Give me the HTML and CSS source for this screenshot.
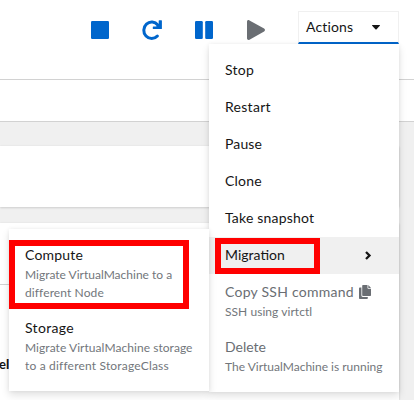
FILE: index.html
```html
<!DOCTYPE html>
<html lang="en">
<head>
<meta charset="utf-8">
<title>VirtualMachine actions</title>
<link rel="stylesheet" href="styles.css">
</head>
<body>
<div class="page">
  <header class="toolbar">
    <svg class="icon" viewBox="0 0 20 20"><rect x="1" y="1" width="18" height="18" rx="1.2"/></svg>
    <svg class="icon" viewBox="0 0 20 20"><path d="M15.400 16A7.900 8.300 0 1 1 15.800 5" class="arc"/><path d="M17.200.2h2.200q.5 0 .5.5v7.800q0 .5-.5.500h-8q-.6 0-.6-.5V6.900q0-.5.6-.5h2.800l2.500-2.600V.7q0-.5.5-.5z"/></svg>
    <svg class="icon" viewBox="0 0 20 20"><rect x="1" y="1" width="7.800" height="18" rx="1.300"/><rect x="11.200" y="1" width="7.800" height="18" rx="1.300"/></svg>
    <svg class="icon muted" viewBox="0 0 20 20"><path d="M1 1.800C1 .3 2.300-.3 3.500.4l14.600 8.200c1.200.7 1.200 2.100 0 2.800L3.500 19.700C2.300 20.300 1 19.600 1 18.200z"/></svg>
    <button class="toggle"><span class="t-actions">Actions</span><svg class="caret" viewBox="0 0 8 5"><path d="M.5 0h7q.8 0 .3.700L4.600 4.200q-.6.600-1.200 0L.2.700Q-.3 0 .5 0z"/></svg></button>
  </header>
  <div class="tabs"></div>
  <main class="content">
    <section class="card first"></section>
    <section class="card second"><div class="rule"></div><b class="label">eIn</b></section>
  </main>
</div>

<div class="menu main-menu">
  <div class="item"><span class="name t-stop">Stop</span></div>
  <div class="item"><span class="name t-restart">Restart</span></div>
  <div class="item"><span class="name t-pause">Pause</span></div>
  <div class="item"><span class="name t-clone">Clone</span></div>
  <div class="item"><span class="name t-snap">Take snapshot</span></div>
  <div class="item active"><span class="name t-mig">Migration</span><svg class="chevron" viewBox="0 0 6 9"><path d="M1 1l3.500 3.500L1 8"/></svg></div>
  <div class="item disabled"><div class="row"><span class="name t-copy">Copy SSH command</span><svg class="copy" viewBox="0 0 12 14"><path d="M4 0h4.500v3q0 .8.800.8H12v6.500q0 .7-.700.700H4q-.8 0-.8-.7V.8Q3.200 0 4 0zM9.300 0L12 2.900H9.300z"/><path d="M.8 2.600h1.600v8q0 1.300 1.300 1.300h5.100v1.300q0 .8-.8.800H.8q-.8 0-.8-.8V3.400q0-.8.800-.8z"/></svg></div><span class="desc t-virt">SSH using virtctl</span></div>
  <div class="item disabled"><span class="name t-del">Delete</span><span class="desc t-run">The VirtualMachine is running</span></div>
</div>
<div class="menu sub-menu">
  <div class="item"><span class="name t-comp">Compute</span><span class="desc t-c1">Migrate VirtualMachine to a</span><span class="desc t-c2">different Node</span></div>
  <div class="item"><span class="name t-stor">Storage</span><span class="desc t-s1">Migrate VirtualMachine storage</span><span class="desc t-s2">to a different StorageClass</span></div>
</div>
<div class="mark mark-migration"></div>
<div class="mark mark-compute"></div>
</body>
</html>
```
FILE: styles.css
```css
* { box-sizing: border-box; }
body {
  margin: 0;
  width: 414px;
  height: 400px;
  overflow: hidden;
  position: relative;
  font-family: Lato, "Noto Sans", sans-serif;
  font-size: 14px;
  line-height: 21px;
  color: #151515;
}
.page { height: 400px; display: flex; flex-direction: column; background: #fff; }
.toolbar {
  height: 80px;
  flex: none;
  display: flex;
  align-items: flex-start;
  gap: 32px;
  padding: 11px 15px 0 90px;
  border-bottom: 1px solid #d2d2d2;
}
.icon { width: 20px; height: 20px; flex: none; margin-top: 9px; fill: #06c; overflow: visible; }
.arc { fill: none; stroke: #06c; stroke-width: 3; stroke-linecap: round; }
.muted { fill: #6a6e73; }
.toggle {
  width: 101px;
  height: 33px;
  margin-left: auto;
  padding: 0 18px 2px 7px;
  display: flex;
  align-items: center;
  justify-content: space-between;
  font: inherit;
  color: inherit;
  background: #fff;
  border: 1px solid #f0f0f0;
  border-bottom: 2px solid #06c;
}
.caret { width: 8px; height: 5px; margin-top: 2px; fill: #151515; }
.tabs { height: 42px; flex: none; border-bottom: 1px solid #d2d2d2; }
.content { flex: 1; background: #f0f0f0; padding: 24px 15px 0 0; display: flex; flex-direction: column; gap: 16px; }
.card { background: #fff; box-shadow: 0 1px 2px rgba(3,3,3,.12), 0 0 2px rgba(3,3,3,.06); }
.first { height: 61px; flex: none; }
.second { flex: 1; padding-top: 61px; }
.rule { height: 1px; background: #d2d2d2; }
.label { display: block; margin: 69px 0 0 -1px; font-size: 13px; }
.menu {
  position: absolute;
  padding: 8px 0;
  background: #fff;
  box-shadow: 0 4px 8px rgba(3,3,3,.12), 0 0 4px rgba(3,3,3,.06);
}
.main-menu { left: 209px; top: 44px; width: 190px; }
.sub-menu { left: 9px; top: 229px; width: 200px; }
.item { padding: 7px 16px 9px; }
.name, .desc { display: block; width: max-content; white-space: nowrap; }
.desc { font-size: 12px; line-height: 18px; color: #72767b; }
.disabled { color: #6a6e73; }
.active {
  display: flex;
  justify-content: space-between;
  align-items: center;
  padding-right: 28px;
  background: #f0f0f0;
}
.chevron { width: 6px; height: 9px; margin-top: 1px; fill: none; stroke: #151515; stroke-width: 2.3; overflow: visible; }
.row { display: flex; align-items: center; gap: 5px; }
.name + .desc, .row + .desc { padding-top: 1px; height: 19px; margin-bottom: -1px; }
.desc + .desc { padding-top: 1px; margin-bottom: -1px; }
.copy { width: 12px; height: 14px; fill: #6a6e73; flex: none; }
.t-actions { letter-spacing: .15px; }
.t-stop, .t-restart { letter-spacing: .28px; }
.t-pause { letter-spacing: .12px; }
.t-clone, .t-snap, .t-comp { letter-spacing: .2px; }
.t-copy { letter-spacing: .25px; }
.t-stor { letter-spacing: .33px; }
.t-s1, .t-virt { letter-spacing: .05px; }
.t-s2 { letter-spacing: .18px; }
.t-c2 { letter-spacing: .1px; }
.mark { position: absolute; border: 6px solid #f00; }
.mark-migration { left: 215px; top: 238px; width: 105px; height: 36px; }
.mark-compute { left: 9px; top: 240px; width: 180px; height: 69px; }
```
